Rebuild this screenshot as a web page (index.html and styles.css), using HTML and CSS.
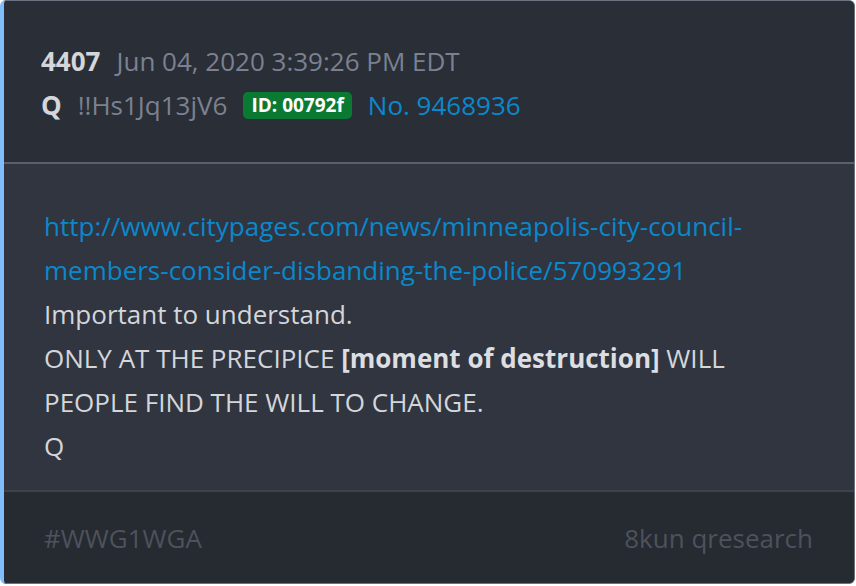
FILE: index.html
```html
<!DOCTYPE html>
<html lang="en">
<head>
  <meta charset="UTF-8" />
  <meta name="viewport" content="width=device-width, initial-scale=1.0" />
  <title>4407</title>
  <link rel="stylesheet" href="styles.css">
</head>
<body>

  <!-- Kartu post -->
  <div class="card">
    <div class="cardHead">
      <div class="metaRow">
        <span class="postNum">4407</span>
        <span class="postDate">Jun 04, 2020 3:39:26 PM EDT</span>
      </div>
      <div class="metaRow">
        <span class="postName">Q</span>
        <span class="tripcode">!!Hs1Jq13jV6</span>
        <span class="idBadge">ID: 00792f</span>
        <a href="#" class="postLink">No. 9468936</a>
      </div>
    </div>

    <div class="cardBody">
      <a href="#" class="bodyLink">http://www.citypages.com/news/minneapolis-city-council-members-consider-disbanding-the-police/570993291</a>
      <p>Important to understand.</p>
      <p>ONLY AT THE PRECIPICE <b>[moment of destruction]</b> WILL PEOPLE FIND THE WILL TO CHANGE.</p>
      <p>Q</p>
    </div>

    <div class="cardFoot">
      <span>#WWG1WGA</span>
      <span>8kun qresearch</span>
    </div>
  </div>

</body>
</html>
```

FILE: styles.css
```css
body {
  margin: 0;
  background: #ffffff;
  font-family: "Open Sans", sans-serif;
}

.card {
  width: 850px;
  height: 582px;
  display: flex;
  flex-direction: column;
  border: 1px solid #6d7281;
  border-left: 4px solid #80bdfb;
  border-radius: 6px;
  overflow: hidden;
  background: #303540;
}

.cardHead {
  background: #2a2e37;
  padding: 38px 40px 35px 37px;
  border-bottom: 2px solid #5b5f69;
  font-size: 26px;
  line-height: 44px;
}

.metaRow {
  display: flex;
  align-items: center;
  gap: 16px;
}

.postNum,
.postName {
  color: #d4d6da;
  font-weight: bold;
}

.postDate,
.tripcode {
  color: #7b8190;
}

.idBadge {
  background: #0a7a33;
  color: #ffffff;
  font-weight: bold;
  font-size: 19px;
  line-height: 27px;
  padding: 0 8px;
  border-radius: 5px;
}

.postLink {
  color: #0a88cc;
  text-decoration: none;
}

.cardBody {
  flex: 1;
  padding: 40px 40px 0 40px;
  font-size: 26px;
  line-height: 44px;
  color: #d4d6da;
}

.cardBody p {
  margin: 0;
}

.cardBody b {
  color: #dcdee1;
}

.bodyLink {
  color: #0a88cc;
  text-decoration: none;
}

.cardFoot {
  background: #262a31;
  border-top: 2px solid #3d424c;
  height: 91px;
  padding: 0 41px 0 40px;
  display: flex;
  align-items: center;
  justify-content: space-between;
  font-size: 26px;
  color: #4d525c;
}
```
